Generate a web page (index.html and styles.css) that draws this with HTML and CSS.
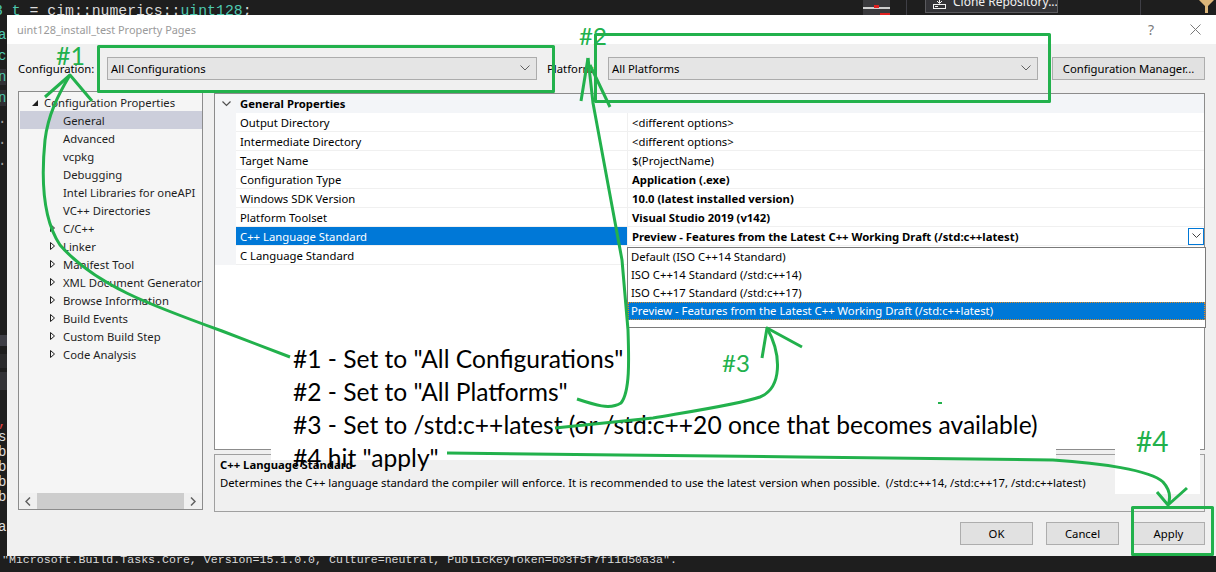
FILE: index.html
```html
<!DOCTYPE html>
<html>
<head>
<meta charset="utf-8">
<title>Property Pages</title>
<link rel="stylesheet" href="styles.css">
</head>
<body>
<div class="screen">
  <div class="ide-top">
    <div class="top-code"><span class="ty">8_t</span> = cim::numerics::<span class="ty">uint128</span>;</div>
    <div class="tb-block">
      <svg width="27" height="15" viewBox="0 0 27 15"><rect x="0" y="0" width="27" height="15" fill="#3a3a3d"/><rect x="0" y="7" width="27" height="2" fill="#d0d0d0"/><rect x="11" y="5" width="5" height="3" fill="#e02020"/><rect x="17" y="13" width="10" height="2" fill="#e02020"/></svg>
    </div>
    <div class="tb-sep"></div>
    <div class="clone">
      <svg class="clone-ico" width="15" height="12" viewBox="0 0 15 12"><path d="M7.5 0V5M5 3L7.5 5.5L10 3" stroke="#f1f1f1" fill="none"/><rect x="1.5" y="6.5" width="12" height="4" fill="none" stroke="#f1f1f1"/><rect x="3" y="8" width="3" height="1" fill="#f1f1f1"/></svg>
      <span class="clone-txt">Clone Repository...</span>
    </div>
    <div class="tb-sep sep2"></div>
    <div class="funnel">
      <svg width="15" height="13" viewBox="0 0 15 13"><path d="M0 0H15L9 6V13H6V6Z" fill="#dcb67a"/></svg>
    </div>
  </div>

  <div class="ide-mid">
    <div class="gutter">
      <pre class="ed"><span class="ty">a</span>
<span class="ty">c</span>
<span class="ty hl">n</span>
<span class="ty hl">n</span>
<span class="dim">.</span>
<span class="dim">.</span>
<span class="dim">.</span></pre>
      <div class="band band1"></div>
      <div class="band band2"></div>
      <div class="band band3"></div>
      <pre class="out"><span class="red">,</span>
s
b
b
b
b

a</pre>
    </div>

    <div class="dialog">
      <div class="titlebar">
        <span class="title">uint128_install_test Property Pages</span>
        <span class="tb-btn help">?</span>
        <span class="tb-btn close"><svg width="11" height="11" viewBox="0 0 11 11"><path d="M0.5 0.5L10.5 10.5M10.5 0.5L0.5 10.5" stroke="#7a7a7a" fill="none"/></svg></span>
      </div>

      <div class="dlg-body">
        <div class="config-row">
          <span class="lbl lbl-conf">Configuration:</span>
          <div class="combo"><span>All Configurations</span><svg class="chev" width="10" height="6" viewBox="0 0 10 6"><path d="M0.5 0.5L5 5L9.5 0.5" stroke="#606060" fill="none"/></svg></div>
          <span class="lbl lbl-plat">Platform:</span>
          <div class="combo"><span>All Platforms</span><svg class="chev" width="10" height="6" viewBox="0 0 10 6"><path d="M0.5 0.5L5 5L9.5 0.5" stroke="#606060" fill="none"/></svg></div>
          <button class="btn mgr">Configuration Manager...</button>
        </div>

        <div class="main">
          <div class="tree">
            <div class="tree-list">
              <div class="node root"><span class="exp"><svg width="6" height="6" viewBox="0 0 6 6"><path d="M6 0V6H0Z" fill="#1e1e1e"/></svg></span>Configuration Properties</div>
              <div class="node leaf sel">General</div>
              <div class="node leaf">Advanced</div>
              <div class="node leaf">vcpkg</div>
              <div class="node leaf">Debugging</div>
              <div class="node leaf">Intel Libraries for oneAPI</div>
              <div class="node leaf">VC++ Directories</div>
              <div class="node child"><span class="exp"><svg width="5" height="8" viewBox="0 0 5 8"><path d="M0.5 0.5L4.5 4L0.5 7.5Z" fill="none" stroke="#1e1e1e"/></svg></span>C/C++</div>
              <div class="node child"><span class="exp"><svg width="5" height="8" viewBox="0 0 5 8"><path d="M0.5 0.5L4.5 4L0.5 7.5Z" fill="none" stroke="#1e1e1e"/></svg></span>Linker</div>
              <div class="node child"><span class="exp"><svg width="5" height="8" viewBox="0 0 5 8"><path d="M0.5 0.5L4.5 4L0.5 7.5Z" fill="none" stroke="#1e1e1e"/></svg></span>Manifest Tool</div>
              <div class="node child"><span class="exp"><svg width="5" height="8" viewBox="0 0 5 8"><path d="M0.5 0.5L4.5 4L0.5 7.5Z" fill="none" stroke="#1e1e1e"/></svg></span>XML Document Generator</div>
              <div class="node child"><span class="exp"><svg width="5" height="8" viewBox="0 0 5 8"><path d="M0.5 0.5L4.5 4L0.5 7.5Z" fill="none" stroke="#1e1e1e"/></svg></span>Browse Information</div>
              <div class="node child"><span class="exp"><svg width="5" height="8" viewBox="0 0 5 8"><path d="M0.5 0.5L4.5 4L0.5 7.5Z" fill="none" stroke="#1e1e1e"/></svg></span>Build Events</div>
              <div class="node child"><span class="exp"><svg width="5" height="8" viewBox="0 0 5 8"><path d="M0.5 0.5L4.5 4L0.5 7.5Z" fill="none" stroke="#1e1e1e"/></svg></span>Custom Build Step</div>
              <div class="node child"><span class="exp"><svg width="5" height="8" viewBox="0 0 5 8"><path d="M0.5 0.5L4.5 4L0.5 7.5Z" fill="none" stroke="#1e1e1e"/></svg></span>Code Analysis</div>
            </div>
            <div class="hscroll">
              <span class="arr"><svg width="6" height="9" viewBox="0 0 6 9"><path d="M5 0.5L1 4.5L5 8.5" stroke="#606060" stroke-width="1.5" fill="none"/></svg></span>
              <span class="thumb"></span>
              <span class="arr"><svg width="6" height="9" viewBox="0 0 6 9"><path d="M1 0.5L5 4.5L1 8.5" stroke="#606060" stroke-width="1.5" fill="none"/></svg></span>
            </div>
          </div>

          <div class="right">
            <div class="grid">
              <div class="grow head"><span class="gut"><svg width="9" height="6" viewBox="0 0 9 6"><path d="M0.5 0.5L4.5 4.5L8.5 0.5" stroke="#505050" fill="none" stroke-width="1.2"/></svg></span><span class="gname">General Properties</span></div>
              <div class="grow"><span class="gut"></span><span class="gname">Output Directory</span><span class="gval">&lt;different options&gt;</span></div>
              <div class="grow"><span class="gut"></span><span class="gname">Intermediate Directory</span><span class="gval">&lt;different options&gt;</span></div>
              <div class="grow"><span class="gut"></span><span class="gname">Target Name</span><span class="gval">$(ProjectName)</span></div>
              <div class="grow"><span class="gut"></span><span class="gname">Configuration Type</span><span class="gval b">Application (.exe)</span></div>
              <div class="grow"><span class="gut"></span><span class="gname">Windows SDK Version</span><span class="gval b">10.0 (latest installed version)</span></div>
              <div class="grow"><span class="gut"></span><span class="gname">Platform Toolset</span><span class="gval b">Visual Studio 2019 (v142)</span></div>
              <div class="grow"><span class="gut"></span><span class="gname selname">C++ Language Standard</span><span class="gval b"><span class="vtext">Preview - Features from the Latest C++ Working Draft (/std:c++latest)</span><span class="dropbtn"><svg width="9" height="6" viewBox="0 0 9 6"><path d="M0.5 0.5L4.5 4.5L8.5 0.5" stroke="#404040" fill="none"/></svg></span></span></div>
              <div class="grow"><span class="gut"></span><span class="gname">C Language Standard</span><span class="gval"></span></div>

              <div class="popup">
                <div class="pop-item">Default (ISO C++14 Standard)</div>
                <div class="pop-item">ISO C++14 Standard (/std:c++14)</div>
                <div class="pop-item">ISO C++17 Standard (/std:c++17)</div>
                <div class="pop-item pop-sel">Preview - Features from the Latest C++ Working Draft (/std:c++latest)</div>
              </div>
            </div>
            <div class="desc">
              <div class="desc-title">C++ Language Standard</div>
              <div class="desc-text">Determines the C++ language standard the compiler will enforce. It is recommended to use the latest version when possible.  (/std:c++14, /std:c++17, /std:c++latest)</div>
            </div>
          </div>
        </div>

        <div class="buttons">
          <button class="btn">OK</button>
          <button class="btn">Cancel</button>
          <button class="btn">Apply</button>
        </div>
      </div>
    </div>
  </div>

  <div class="ide-bottom"><pre>"Microsoft.Build.Tasks.Core, Version=15.1.0.0, Culture=neutral, PublicKeyToken=b03f5f7f11d50a3a".</pre></div>

  <div class="note">
    <div class="note-line">#1 - Set to "All Configurations"</div>
    <div class="note-line">#2 - Set to "All Platforms"</div>
    <div class="note-line">#3 - Set to /std:c++latest (or /std:c++20 once that becomes available)</div>
    <div class="note-line">#4 hit "apply"</div>
  </div>
  <div class="note4"></div>

  <svg class="ink" width="1216" height="572" viewBox="0 0 1216 572">
    <g fill="none" stroke="#22b14c" stroke-width="3" stroke-linejoin="round">
      <rect x="98.5" y="46.5" width="455" height="45"/>
      <rect x="595.5" y="34.5" width="454" height="67"/>
      <rect x="1132.5" y="507.5" width="80" height="47"/>
      <path d="M290 357 L222 331 C150 305 95 285 60 245 C40 215 42 170 45 140 C48 115 58 95 70 75"/>
      <path d="M45 97 L70 75 L92 101"/>
      <path d="M577 399 C595 405 610 410 621 403 C630 392 629 360 628 330 L622 260 L593 103 L588 58"/>
      <path d="M581 101 L588 58 M590 65 L610 107"/>
      <path d="M555 428 L653 418 C700 410 740 404 760 397 C782 388 782 355 767 328"/>
      <path d="M762 358 L767 328 L802 347"/>
      <path d="M447 453 L620 455 L800 457 L1053 460 C1100 463 1150 470 1163 482 C1172 492 1170 500 1168 505"/>
      <path d="M1157 492 L1168 505 L1187 488"/>
    </g>
    <rect x="938" y="402" width="4" height="2" fill="#22b14c"/>
    <g class="ink-text" fill="#22b14c">
      <text x="56" y="65" font-size="25">#1</text>
      <text x="579" y="45" font-size="24">#2</text>
      <text x="722" y="372" font-size="24">#3</text>
      <text x="1136" y="452" font-size="28">#4</text>
    </g>
  </svg>
</div>
</body>
</html>
```

FILE: styles.css
```css
* { box-sizing: border-box; margin: 0; padding: 0; }
html, body { width: 1216px; height: 572px; overflow: hidden; background: #1e1e1e; }
body { font-family: "Noto Sans", "Liberation Sans", sans-serif; font-size: 11.3px; color: #000; }

.screen { position: relative; width: 1216px; height: 572px; display: flex; flex-direction: column; overflow: hidden; background: #1e1e1e; }

/* ---------- IDE background ---------- */
.ide-top { flex: 0 0 15px; height: 15px; display: flex; overflow: hidden; }
.top-code { flex: 0 0 869px; margin-left: -6px; padding-top: 4px; font-family: "Liberation Mono", monospace; font-size: 14.8px; line-height: 15px; color: #dcdcdc; white-space: pre; }
.ty { color: #4ec9b0; }
.tb-block { flex: 0 0 27px; height: 15px; }
.tb-block svg { display: block; }
.tb-sep { flex: 0 0 1px; height: 15px; background: #3f3f46; margin-left: 16px; }
.clone { flex: 0 0 133px; height: 13px; margin-left: 18px; border: 1px solid #5a5a5e; border-top: none; background: #333337; display: flex; align-items: flex-start; overflow: hidden; color: #f1f1f1; }
.clone-ico { flex: 0 0 15px; margin: -2px 6px 0 6px; }
.clone-txt { font-size: 12px; line-height: 16px; margin-top: -6px; white-space: nowrap; }
.sep2 { margin-left: 82px; }
.funnel { flex: 0 0 15px; margin-left: 58px; }
.funnel svg { display: block; }

.ide-mid { flex: 0 0 541px; height: 541px; display: flex; }
.gutter { flex: 0 0 7px; overflow: hidden; display: flex; flex-direction: column; }
.gutter pre { font-family: "Liberation Mono", monospace; font-size: 14px; color: #dcdcdc; margin-left: -2px; }
.ed { padding-top: 10px; line-height: 21px; }
.hl { background: #2f2f33; }
.dim { color: #9b9b9b; }
.red { color: #e04040; }
.band { flex: 0 0 auto; }
.band1 { margin-top: 163px; height: 11px; background: #3f3f46; }
.band2 { margin-top: 8px; height: 14px; background: #2a2a2c; }
.band3 { margin-top: 4px; height: 18px; background: #333337; }
.out { margin-top: 25px; line-height: 15px; }

.ide-bottom { flex: 0 0 16px; height: 16px; overflow: hidden; }
.ide-bottom pre { font-family: "Liberation Mono", monospace; font-size: 11.6px; line-height: 18px; margin-top: -5px; padding-left: 2px; color: #dcdcdc; }

/* ---------- dialog ---------- */
.dialog { flex: 0 0 1209px; min-width: 0; display: flex; flex-direction: column; background: #f0f0f0; }
.titlebar { flex: 0 0 29px; height: 29px; background: #fff; display: flex; align-items: center; padding-left: 10px; }
.title { flex: 1; color: #9a9a9a; white-space: nowrap; font-size: 10.9px; }
.tb-btn { display: flex; align-items: center; justify-content: center; color: #7a7a7a; }
.help { flex: 0 0 46px; font-size: 14px; }
.close { flex: 0 0 42px; }

.dlg-body { flex: 1; padding: 12px 11px 0 11px; display: flex; flex-direction: column; min-width: 0; }

.config-row { display: flex; align-items: center; height: 24px; }
.lbl { white-space: nowrap; }
.lbl-conf { flex: 0 0 89px; }
.lbl-plat { flex: 0 0 61px; margin-left: 10px; }
.combo { flex: 0 0 430px; height: 23px; border: 1px solid #acacac; background: #e5e5e5; display: flex; align-items: center; justify-content: space-between; padding: 0 6px 0 3px; }
.chev { display: block; }

.btn { font-family: inherit; font-size: 11.3px; color: #000; background: #e1e1e1; border: 1px solid #adadad; height: 23px; width: 73px; }
.mgr { width: 153px; margin-left: 14px; }

.main { display: flex; gap: 11px; margin-top: 11px; align-items: flex-start; }

.tree { flex: 0 0 185px; width: 185px; min-width: 0; overflow: hidden; height: 419px; border: 1px solid #8c8c8c; background: #f5f5f5; display: flex; flex-direction: column; padding-top: 1px; }
.tree-list { flex: 1; color: #1e1e1e; min-width: 0; overflow: hidden; }
.node { height: 18px; display: flex; align-items: center; white-space: nowrap; }
.node .exp { display: flex; align-items: center; }
.root { padding-left: 13px; }
.root .exp { flex: 0 0 12px; padding-top: 2px; }
.child { padding-left: 31px; }
.child .exp { flex: 0 0 13px; }
.leaf { padding-left: 44px; }
.sel { background: #cccedb; margin-left: 1px; padding-left: 43px; }

.hscroll { flex: 0 0 16px; height: 16px; display: flex; background: #f0f0f0; }
.hscroll .arr { flex: 0 0 18px; display: flex; align-items: center; justify-content: center; }
.thumb { flex: 0 0 147px; background: #cdcdcd; }

.right { flex: 1; min-width: 0; padding-top: 2px; display: flex; flex-direction: column; }
.grid { position: relative; height: 357px; border: 1px solid #8c8c8c; background: #fff; }
.grow { display: flex; height: 19px; line-height: 19px; white-space: nowrap; }
.gut { flex: 0 0 21px; background: #f4f5f7; display: flex; align-items: center; justify-content: center; padding-left: 2px; }
.gname { flex: 0 0 392px; padding-left: 4px; border-right: 1px solid #f0f0f0; border-bottom: 1px solid #f0f0f0; }
.gval { flex: 1; min-width: 0; padding-left: 4px; border-bottom: 1px solid #f0f0f0; display: flex; align-items: center; }
.b { font-weight: bold; }
.head { background: #f3f5f8; }
.head .gname { border: none; font-weight: bold; }
.selname { background: #0078d7; color: #fff; }
.vtext { flex: 1; }
.dropbtn { flex: 0 0 16px; height: 17px; border: 1px solid #0078d7; background: #fff; display: flex; align-items: center; justify-content: center; }

.popup { position: absolute; left: 412px; top: 153px; width: 579px; height: 81px; border: 1px solid #7a7a7a; background: #fff; }
.pop-item { height: 18px; line-height: 18px; padding-left: 3px; white-space: nowrap; }
.pop-sel { background: #0078d7; color: #fff; outline: 1px dotted #e08a1e; outline-offset: -1px; }

.desc { margin-top: 4px; height: 58px; border: 1px solid #a0a0a0; padding: 1px 5px; }
.desc-title { font-weight: bold; line-height: 18px; }
.desc-text { line-height: 18px; white-space: pre; }

.buttons { display: flex; justify-content: flex-end; gap: 13px; margin-top: 10px; }

/* ---------- annotations ---------- */
.note { position: absolute; left: 271px; top: 336px; width: 785px; height: 124px; background: #fff; padding: 5.5px 0 0 22px; font-family: Lato, "Open Sans", sans-serif; font-size: 24.6px; line-height: 33px; color: #000; white-space: nowrap; }
.note4 { position: absolute; left: 1115px; top: 425px; width: 85px; height: 69px; background: #fff; }
.ink { position: absolute; left: 0; top: 0; pointer-events: none; }
.ink-text { font-family: Lato, "Open Sans", sans-serif; }
```
